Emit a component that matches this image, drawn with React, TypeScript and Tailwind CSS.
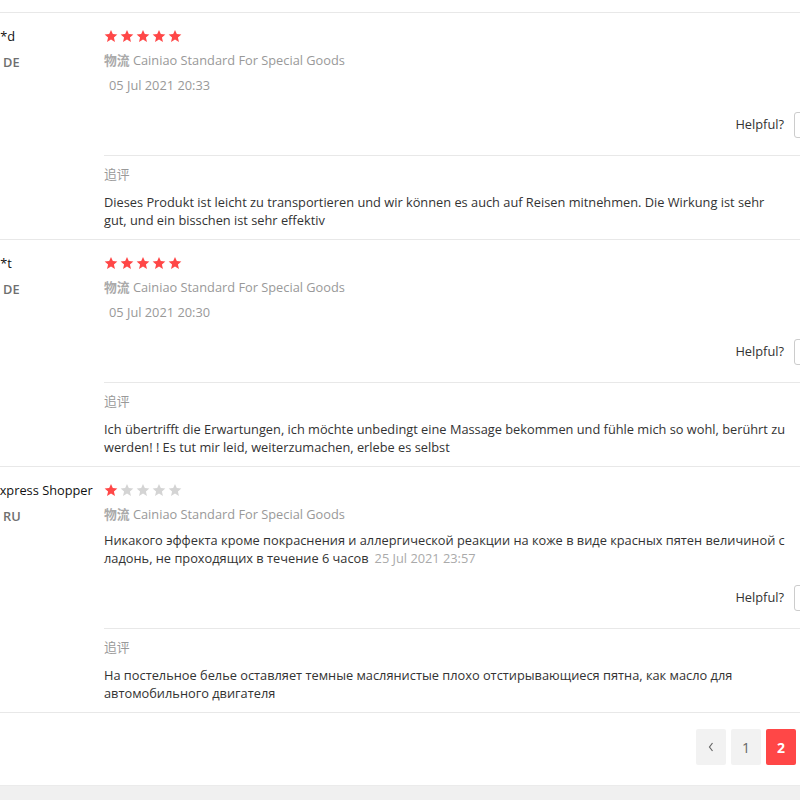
const font = { fontFamily: '"Open Sans", "Noto Sans CJK SC", sans-serif' };

type Review = {
  name: string;
  country: string;
  stars: number;
  text?: string;
  date: string;
  follow: string;
};

const reviews: Review[] = [
  {
    name: "A***d",
    country: "DE",
    stars: 5,
    date: "05 Jul 2021 20:33",
    follow:
      "Dieses Produkt ist leicht zu transportieren und wir können es auch auf Reisen mitnehmen. Die Wirkung ist sehr gut, und ein bisschen ist sehr effektiv",
  },
  {
    name: "A***t",
    country: "DE",
    stars: 5,
    date: "05 Jul 2021 20:30",
    follow:
      "Ich übertrifft die Erwartungen, ich möchte unbedingt eine Massage bekommen und fühle mich so wohl, berührt zu werden! ! Es tut mir leid, weiterzumachen, erlebe es selbst",
  },
  {
    name: "AliExpress Shopper",
    country: "RU",
    stars: 1,
    text: "Никакого эффекта кроме покраснения и аллергической реакции на коже в виде красных пятен величиной с ладонь, не проходящих в течение 6 часов",
    date: "25 Jul 2021 23:57",
    follow:
      "На постельное белье оставляет темные маслянистые плохо отстирывающиеся пятна, как масло для автомобильного двигателя",
  },
];

function Star({ on }: { on: boolean }) {
  return (
    <svg width="14" height="14" viewBox="0 0 24 24" className={on ? "text-[#ff4747]" : "text-[#d4d4d4]"}>
      <path
        fill="currentColor"
        d="M12 1.5l3.1 7.2 7.8.7-5.9 5.2 1.8 7.7L12 18.2l-6.8 4.1 1.8-7.7-5.9-5.2 7.8-.7z"
      />
    </svg>
  );
}

function ReviewRow({ r }: { r: Review }) {
  return (
    <div className="flex border-b border-[#e8e8e8] pt-[14px] pb-[10px]">
      <div className="w-[126px] shrink-0">
        <div className="h-[18px] text-[12.8px] leading-[18px] text-[#111] whitespace-nowrap">{r.name}</div>
        <div className="mt-[8px] flex items-center gap-[9px] h-[18px]">
          <span className="w-[16px] h-[11px] bg-[#ddd]" />
          <span className="text-[12.8px] leading-[18px] font-semibold text-[#6f6f6f]">{r.country}</span>
        </div>
      </div>
      <div className="w-[750px] shrink-0">
        <div className="flex items-center gap-[2px] h-[18px]">
          {[0, 1, 2, 3, 4].map((i) => (
            <Star key={i} on={i < r.stars} />
          ))}
        </div>
        <div className="mt-[6px] text-[12.8px] leading-[18px] text-[#999]">
          <span className="font-semibold text-[#aaa]">物流</span> Cainiao Standard For Special Goods
        </div>
        {r.text ? (
          <div className="mt-[8px] w-[686px] text-[12.8px] leading-[18px] text-[#333]">
            {r.text}
            <span className="ml-[6px] text-[#aaa]">{r.date}</span>
          </div>
        ) : (
          <div className="mt-[7px] pl-[5px] text-[12.8px] leading-[18px] text-[#999]">{r.date}</div>
        )}
        <div className="mt-[18px] flex items-center justify-end gap-[10px]">
          <span className="text-[12.8px] text-[#333]">Helpful?</span>
          <span className="w-[60px] h-[26px] border border-[#ccc] rounded-[3px]" />
        </div>
        <div className="mt-[17px] border-t border-[#e8e8e8] pt-[9px]">
          <div className="text-[12.8px] leading-[18px] text-[#999]">追评</div>
          <div className="mt-[10px] w-[686px] text-[12.8px] leading-[18px] text-[#333]">{r.follow}</div>
        </div>
      </div>
    </div>
  );
}

export default function App() {
  return (
    <div className="w-[800px] h-[800px] overflow-hidden bg-white flex flex-col" style={font}>
      <div className="h-[12px] shrink-0" />
      <div className="-ml-[22px] w-[900px] border-t border-[#e8e8e8]">
        {reviews.map((r, i) => (
          <ReviewRow key={i} r={r} />
        ))}
      </div>
      <div className="flex justify-end gap-[5px] pr-[4px] pt-[16px]">
        <span className="w-[30px] h-[36px] rounded-[2px] bg-[#f2f2f2] flex items-center justify-center">
          <svg width="10" height="14" viewBox="0 0 10 14">
            <path d="M6.5 3L3.5 7l3 4" fill="none" stroke="#666" strokeWidth="1.2" />
          </svg>
        </span>
        <span className="w-[30px] h-[36px] rounded-[2px] bg-[#f2f2f2] flex items-center justify-center text-[14px] text-[#666]">
          1
        </span>
        <span className="w-[30px] h-[36px] rounded-[2px] bg-[#ff4747] flex items-center justify-center text-[14px] font-bold text-white">
          2
        </span>
      </div>
      <div className="mt-[20px] flex-1 bg-[#f0f0f0] border-t border-[#ebebeb]" />
    </div>
  );
}
